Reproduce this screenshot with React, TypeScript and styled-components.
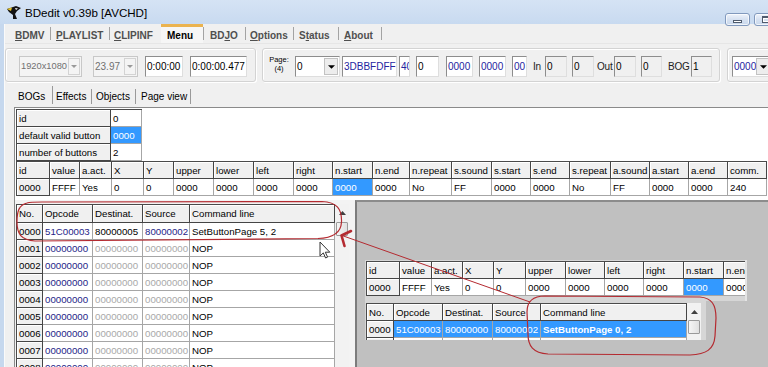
import React from 'react';
import styled, { createGlobalStyle } from 'styled-components';

const FONT = `"Liberation Sans", Arial, Helvetica, sans-serif`;

const Global = createGlobalStyle`
  html, body { margin: 0; padding: 0; background: #f0f0f0; }
  body { font-family: ${FONT}; }
  *, *::before, *::after { box-sizing: border-box; }
`;

/* ---------- window frame ---------- */
const Window = styled.div`
  position: relative;
  width: 768px;
  height: 367px;
  overflow: hidden;
  background: #c6d8ee;
  display: flex;
  flex-direction: column;
`;

const TitleBar = styled.div`
  flex: none;
  height: 24px;
  display: flex;
  align-items: flex-start;
  padding-left: 6px;
  background: linear-gradient(to bottom, #d5e3f4, #c8daf0);
`;

const AppIcon = styled.svg`
  flex: none;
  margin-top: 5px;
`;

const TitleText = styled.span`
  margin: 5px 0 0 3px;
  font-size: 11.6px;
  line-height: 15px;
  color: #000;
  white-space: nowrap;
`;

const CaptionBox = styled.div`
  flex: none;
  width: 43px;
  margin-left: auto;
  margin-top: 13px;
  display: flex;
  gap: 4px;
  z-index: 1;
`;

const CaptionBtn = styled.div`
  flex: none;
  width: 25px;
  height: 13px;
  border: 1px solid #8199bd;
  border-radius: 3px;
  background: linear-gradient(to bottom, #eef3fb, #d6e1f1 50%, #c9d8ec);
  box-shadow: inset 0 0 0 1px rgba(255, 255, 255, 0.7);
  display: flex;
  align-items: center;
  justify-content: center;
`;

const MinGlyph = styled.div`
  width: 9px;
  height: 3px;
  margin-top: 3px;
  background: #fff;
  border: 1px solid #4f5b6d;
`;

const MaxGlyph = styled.div`
  width: 9px;
  height: 7px;
  background: transparent;
  border: 1px solid #4f5b6d;
  border-top-width: 2px;
  box-shadow: inset 0 0 0 1px #fff;
`;

const Client = styled.div`
  flex: 1;
  min-height: 0;
  margin-left: 4px;
  border-left: 1px solid #fafafa;
  background: #f0f0f0;
  display: flex;
  flex-direction: column;
`;

/* ---------- main tabs ---------- */
const MainTabs = styled.div`
  flex: none;
  height: 20px;
  display: flex;
  align-items: stretch;
  padding-left: 4px;
  border-bottom: 1px solid #e6e6e6;
`;

const MainTab = styled.div<{ $w: number; $pl: number; $active?: boolean }>`
  flex: none;
  width: ${(p) => p.$w}px;
  padding-left: ${(p) => p.$pl}px;
  display: flex;
  align-items: center;
  font-size: 10px;
  font-weight: 700;
  white-space: nowrap;
  color: ${(p) => (p.$active ? '#000' : '#4f4f4f')};
  border-top: 3px solid ${(p) => (p.$active ? '#ebb34f' : 'transparent')};
  background: ${(p) => (p.$active ? '#f6f6f6' : 'transparent')};
  u {
    text-decoration: underline;
  }
`;

const TabSep = styled.div`
  flex: none;
  width: 1px;
  height: 13px;
  align-self: center;
  background: #a3a3a3;
`;

/* ---------- toolbar ---------- */
const Toolbar = styled.div`
  flex: none;
  height: 42px;
  display: flex;
  align-items: flex-start;
  padding-top: 4px;
`;

const GroupBox = styled.div<{ $w: number; $ml: number }>`
  flex: none;
  width: ${(p) => p.$w}px;
  margin-left: ${(p) => p.$ml}px;
  height: 34px;
  border: 1px solid #d3d3d3;
  border-radius: 3px;
  box-shadow: inset 1px 1px 0 #fff, 1px 1px 0 #fff;
  display: flex;
  align-items: flex-start;
  padding-top: 7px;
`;

const Edit = styled.div<{ $w: number; $ml: number; $color?: string; $ro?: boolean }>`
  flex: none;
  width: ${(p) => p.$w}px;
  margin-left: ${(p) => p.$ml}px;
  height: 21px;
  border: 1px solid;
  border-color: #8d8d8d #dedede #dedede #8d8d8d;
  background: ${(p) => (p.$ro ? '#f0f0f0' : '#fff')};
  color: ${(p) => p.$color ?? '#000'};
  font-size: 10px;
  line-height: 19px;
  padding-left: 1px;
  overflow: hidden;
  white-space: nowrap;
`;

const Combo = styled.div<{ $w: number; $ml: number; $disabled?: boolean }>`
  flex: none;
  width: ${(p) => p.$w}px;
  margin-left: ${(p) => p.$ml}px;
  height: 21px;
  display: flex;
  align-items: center;
  border: 1px solid;
  border-color: ${(p) =>
    p.$disabled ? '#c8c8c8' : '#8d8d8d #dedede #dedede #8d8d8d'};
  background: ${(p) => (p.$disabled ? '#f4f4f4' : '#fff')};
`;

const ComboText = styled.div<{ $color?: string; $size?: number }>`
  flex: 1;
  min-width: 0;
  padding-left: 1px;
  font-size: ${(p) => p.$size ?? 10}px;
  line-height: 19px;
  color: ${(p) => p.$color ?? '#000'};
  overflow: hidden;
  white-space: nowrap;
`;

const DropBtn = styled.div<{ $disabled?: boolean }>`
  flex: none;
  width: ${(p) => (p.$disabled ? 12 : 14)}px;
  height: 17px;
  margin-right: 1px;
  display: flex;
  align-items: center;
  justify-content: center;
  background: ${(p) => (p.$disabled ? '#f4f4f4' : '#ededed')};
  border: 1px solid ${(p) => (p.$disabled ? '#d3d3d3' : '#c2c2c2')};
`;

const PageLabel = styled.div`
  flex: none;
  width: 24px;
  margin-left: 4px;
  margin-top: -1px;
  display: flex;
  flex-direction: column;
  align-items: center;
  font-size: 7.5px;
  line-height: 9px;
  color: #000;
`;

const FieldLabel = styled.div<{ $w: number; $ml: number }>`
  flex: none;
  width: ${(p) => p.$w}px;
  margin-left: ${(p) => p.$ml}px;
  font-size: 10px;
  line-height: 21px;
  color: #222;
  white-space: nowrap;
  letter-spacing: -0.2px;
`;

/* ---------- sub tabs ---------- */
const SubTabs = styled.div`
  flex: none;
  height: 21px;
  display: flex;
  align-items: flex-end;
  padding-left: 9px;
`;

const SubTab = styled.div<{ $w: number; $pl: number }>`
  flex: none;
  width: ${(p) => p.$w}px;
  padding-left: ${(p) => p.$pl}px;
  height: 21px;
  display: flex;
  align-items: center;
  font-size: 10px;
  color: #000;
  white-space: nowrap;
`;

const SubSep = styled.div<{ $h: number }>`
  flex: none;
  width: 1px;
  height: ${(p) => p.$h}px;
  margin-bottom: 3px;
  background: #9a9a9a;
`;

/* ---------- tab page ---------- */
const TabPage = styled.div`
  flex: 1;
  min-height: 0;
  margin-left: 9px;
  border-top: 1px solid #8a8a8a;
  border-left: 1px solid #8a8a8a;
  display: flex;
  flex-direction: column;
  overflow: hidden;
`;

const UpperArea = styled.div`
  flex: none;
  height: 92px;
  background: #fff;
  padding: 1px 0 0 1px;
`;

const Bottom = styled.div`
  flex: 1;
  min-height: 0;
  display: flex;
`;

const CmdPane = styled.div`
  flex: none;
  width: 340px;
  padding: 4px 0 0 1px;
  display: flex;
  align-items: flex-start;
  background: #f3f3f3;
`;

const Preview = styled.div`
  flex: 1;
  min-width: 0;
  background: #c0c0c0;
  border-top: 2px solid #8c8c8c;
  border-left: 2px solid #7c7c7c;
  padding: 58px 0 0 8px;
  display: flex;
  flex-direction: column;
  align-items: flex-start;
`;

const InsetTop = styled.div`
  flex: none;
  width: 382px;
  height: 41px;
  background: #d6d6d6;
  padding: 1px 0 0 1px;
  overflow: hidden;
  border-right: 2px solid #e4e4e4;
`;

const InsetBottom = styled.div`
  flex: none;
  width: 341px;
  height: 39px;
  background: #d6d6d6;
  padding: 2px 0 0 1px;
  overflow: hidden;
  display: flex;
  align-items: flex-start;
`;

/* ---------- string grids ---------- */
type CellKind = 'fixed' | 'data' | 'sel';
type Tone = 'normal' | 'navy' | 'dim' | 'white';
const TONES: Record<Tone, string> = {
  normal: '#000',
  navy: '#1e1e88',
  dim: '#a9a9a9',
  white: '#fff',
};

const Grid = styled.div<{ $cols: number[]; $head?: number }>`
  flex: none;
  display: grid;
  grid-template-columns: ${(p) => p.$cols.map((c) => `${c}px`).join(' ')};
  grid-template-rows: ${(p) => p.$head ?? 17}px;
  grid-auto-rows: 17px;
  width: max-content;
  border-top: 1px solid #4a4a4a;
  border-left: 1px solid #4a4a4a;
  background: #fff;
`;

const Cell = styled.div<{ $k: CellKind; $c: Tone; $b?: boolean }>`
  display: flex;
  align-items: center;
  padding-left: 2px;
  overflow: hidden;
  white-space: nowrap;
  font-size: 9.7px;
  font-weight: ${(p) => (p.$b ? 700 : 400)};
  color: ${(p) => TONES[p.$c]};
  background: ${(p) =>
    p.$k === 'fixed' ? '#f0f0f0' : p.$k === 'sel' ? '#3399ff' : '#fff'};
  border-right: 1px solid ${(p) => (p.$k === 'fixed' ? '#454545' : '#a6a6a6')};
  border-bottom: 1px solid ${(p) => (p.$k === 'fixed' ? '#454545' : '#a6a6a6')};
  box-shadow: ${(p) => (p.$k === 'fixed' ? 'inset 1px 1px 0 #fff' : 'none')};
`;

const VScroll = styled.div<{ $h: number }>`
  flex: none;
  width: 14px;
  height: ${(p) => p.$h}px;
  background: #f2f2f2;
  display: flex;
  flex-direction: column;
  align-items: center;
`;

const ScrollUp = styled.div<{ $h: number }>`
  flex: none;
  width: 14px;
  height: ${(p) => p.$h}px;
  display: flex;
  align-items: center;
  justify-content: center;
`;

const Thumb = styled.div`
  flex: none;
  width: 12px;
  height: 14px;
  border: 1px solid #9a9a9a;
  border-radius: 1px;
  background: linear-gradient(to right, #f6f6f6, #e0e0e0);
`;

const Overlay = styled.svg`
  position: absolute;
  left: 0;
  top: 0;
  pointer-events: none;
`;

/* ---------- data ---------- */
type Spec = { t: string; k?: CellKind; c?: Tone; b?: boolean };

const renderRow = (cells: Spec[], key: string) =>
  cells.map((s, i) => {
    const k = s.k ?? 'data';
    const c = s.c ?? (k === 'sel' ? 'white' : 'normal');
    return (
      <Cell key={`${key}-${i}`} $k={k} $c={c} $b={s.b}>
        {s.t}
      </Cell>
    );
  });

const head = (labels: string[]): Spec[] => labels.map((t) => ({ t, k: 'fixed' }));

const btnHead = [
  'id', 'value', 'a.act.', 'X', 'Y', 'upper', 'lower', 'left', 'right', 'n.start',
  'n.end', 'n.repeat', 's.sound', 's.start', 's.end', 's.repeat', 'a.sound',
  'a.start', 'a.end', 'comm.',
];
const btnCols = [33, 30, 32, 32, 30, 40, 40, 40, 39, 40, 37, 42, 40, 39, 39, 41, 39, 39, 39, 39];
const btnRow: Spec[] = [
  { t: '0000', k: 'fixed' }, { t: 'FFFF' }, { t: 'Yes' }, { t: '0' }, { t: '0' },
  { t: '0000' }, { t: '0000' }, { t: '0000' }, { t: '0000' }, { t: '0000', k: 'sel' },
  { t: '0000' }, { t: 'No' }, { t: 'FF' }, { t: '0000' }, { t: '0000' }, { t: 'No' },
  { t: 'FF' }, { t: '0000' }, { t: '0000' }, { t: '240' },
];

const insetBtnCols = [33, 32, 31, 31, 32, 40, 39, 39, 40, 40, 40];

const cmdHead = ['No.', 'Opcode', 'Destinat.', 'Source', 'Command line'];
const cmdCols = [26, 50, 50, 47, 145];
const insetCmdCols = [27, 49, 50, 48, 146];

const nopRow = (n: string): Spec[] => [
  { t: n, k: 'fixed' },
  { t: '00000000', c: 'navy' },
  { t: '00000000', c: 'dim' },
  { t: '00000000', c: 'dim' },
  { t: 'NOP' },
];

const cmdRows: Spec[][] = [
  [
    { t: '0000', k: 'fixed' },
    { t: '51C00003', c: 'navy' },
    { t: '80000005' },
    { t: '80000002', c: 'navy' },
    { t: 'SetButtonPage 5, 2' },
  ],
  ...['0001', '0002', '0003', '0004', '0005', '0006', '0007', '0008'].map(nopRow),
];

const insetCmdRows: Spec[][] = [
  [
    { t: '0000', k: 'fixed' },
    { t: '51C00003', k: 'sel' },
    { t: '80000000', k: 'sel' },
    { t: '80000002', k: 'sel' },
    { t: 'SetButtonPage 0, 2', k: 'sel', b: true },
  ],
  nopRow('0001'),
];

const Arrow = ({ color = '#000', w = 7 }: { color?: string; w?: number }) => (
  <svg width={w} height={Math.ceil(w / 2)} viewBox={`0 0 ${w} ${w / 2}`}>
    <path d={`M0 0H${w}L${w / 2} ${w / 2}Z`} fill={color} />
  </svg>
);

const UpArrow = () => (
  <svg width="7" height="4" viewBox="0 0 7 4">
    <path d="M0 4H7L3.5 0Z" fill="#404040" />
  </svg>
);

const mainTabs = [
  { w: 41, pl: 6, u: 'B', rest: 'DMV', sep: true },
  { w: 58, pl: 5, u: 'P', rest: 'LAYLIST', sep: true },
  { w: 51, pl: 4, u: 'C', rest: 'LIPINF', sep: false },
  { w: 42, pl: 6, u: '', rest: 'Menu', sep: true, active: true },
  { w: 41, pl: 6, pre: 'BD', u: 'J', rest: 'O', sep: true },
  { w: 47, pl: 4, u: 'O', rest: 'ptions', sep: true },
  { w: 44, pl: 5, pre: 'S', u: 't', rest: 'atus', sep: true },
  { w: 42, pl: 5, u: 'A', rest: 'bout', sep: true },
];

const subTabs = [
  { w: 38, pl: 4, t: 'BOGs', h: 18 },
  { w: 38, pl: 3, t: 'Effects', h: 15 },
  { w: 43, pl: 4, t: 'Objects', h: 15 },
  { w: 54, pl: 5, t: 'Page view', h: 15 },
];

const NAVY = '#2424a0';
const RED = '#b42a30';

export default function App() {
  return (
    <>
      <Global />
      <Window>
        <TitleBar>
          <AppIcon width="16" height="16" viewBox="0 0 16 16">
            <path d="M1 4 L7 2 L10 1 L15 3 L11 6 L9 9 L11 14 L7 14 L7 10 L3 7 Z" fill="#141414" />
            <path d="M1 4 L6 2.5 L5 6 Z" fill="#e5c326" />
            <path d="M9 3 L12 3.5 L10 5 Z" fill="#fff" />
          </AppIcon>
          <TitleText>BDedit v0.39b [AVCHD]</TitleText>
          <CaptionBox>
            <CaptionBtn>
              <MinGlyph />
            </CaptionBtn>
            <CaptionBtn>
              <MaxGlyph />
            </CaptionBtn>
          </CaptionBox>
        </TitleBar>

        <Client>
          <MainTabs>
            {mainTabs.map((t, i) => (
              <React.Fragment key={i}>
                <MainTab $w={t.w} $pl={t.pl} $active={t.active}>
                  {t.pre}
                  {t.u && <u>{t.u}</u>}
                  {t.rest}
                </MainTab>
                {t.sep && <TabSep />}
              </React.Fragment>
            ))}
          </MainTabs>

          <Toolbar>
            <GroupBox $w={251} $ml={0}>
              <Combo $w={63} $ml={13} $disabled>
                <ComboText $color="#707070" $size={9.3}>1920x1080</ComboText>
                <DropBtn $disabled>
                  <Arrow color="#9a9a9a" w={6} />
                </DropBtn>
              </Combo>
              <Combo $w={45} $ml={11} $disabled>
                <ComboText $color="#707070">23.97</ComboText>
                <DropBtn $disabled>
                  <Arrow color="#9a9a9a" w={6} />
                </DropBtn>
              </Combo>
              <Edit $w={38} $ml={7}>0:00:00</Edit>
              <Edit $w={57} $ml={7}>0:00:00.477</Edit>
            </GroupBox>

            <GroupBox $w={458} $ml={6}>
              <PageLabel>
                <span>Page:</span>
                <span>(4)</span>
              </PageLabel>
              <Combo $w={45} $ml={4}>
                <ComboText>0</ComboText>
                <DropBtn>
                  <Arrow />
                </DropBtn>
              </Combo>
              <Edit $w={55} $ml={2} $color={NAVY}>3DBBFDFF</Edit>
              <Edit $w={11} $ml={2} $color={NAVY}>40</Edit>
              <Edit $w={23} $ml={6}>0</Edit>
              <Edit $w={27} $ml={7} $color={NAVY}>0000</Edit>
              <Edit $w={27} $ml={6} $color={NAVY}>0000</Edit>
              <Edit $w={15} $ml={6} $color={NAVY}>00</Edit>
              <FieldLabel $w={10} $ml={6}>In</FieldLabel>
              <Edit $w={22} $ml={2} $ro>0</Edit>
              <Edit $w={22} $ml={5} $ro>0</Edit>
              <FieldLabel $w={17} $ml={3}>Out</FieldLabel>
              <Edit $w={22} $ml={0} $ro>0</Edit>
              <Edit $w={21} $ml={5} $ro>0</Edit>
              <FieldLabel $w={19} $ml={6}>BOG</FieldLabel>
              <Edit $w={21} $ml={4} $ro>1</Edit>
            </GroupBox>

            <GroupBox $w={60} $ml={7}>
              <Combo $w={40} $ml={4}>
                <ComboText $color={NAVY}>0000</ComboText>
                <DropBtn>
                  <Arrow />
                </DropBtn>
              </Combo>
            </GroupBox>
          </Toolbar>

          <SubTabs>
            {subTabs.map((t) => (
              <React.Fragment key={t.t}>
                <SubTab $w={t.w} $pl={t.pl}>{t.t}</SubTab>
                <SubSep $h={t.h} />
              </React.Fragment>
            ))}
          </SubTabs>

          <TabPage>
            <UpperArea>
              <Grid $cols={[94, 31]}>
                {renderRow([{ t: 'id', k: 'fixed' }, { t: '0' }], 'i0')}
                {renderRow([{ t: 'default valid button', k: 'fixed' }, { t: '0000', k: 'sel' }], 'i1')}
                {renderRow([{ t: 'number of buttons', k: 'fixed' }, { t: '2' }], 'i2')}
              </Grid>
              <Grid $cols={btnCols}>
                {renderRow(head(btnHead), 'bh')}
                {renderRow(btnRow, 'br')}
              </Grid>
            </UpperArea>

            <Bottom>
              <CmdPane>
                <Grid $cols={cmdCols} $head={18}>
                  {renderRow(head(cmdHead), 'ch')}
                  {cmdRows.map((r, i) => renderRow(r, `cr${i}`))}
                </Grid>
                <VScroll $h={170}>
                  <ScrollUp $h={18}>
                    <UpArrow />
                  </ScrollUp>
                  <Thumb />
                </VScroll>
              </CmdPane>

              <Preview>
                <InsetTop>
                  <Grid $cols={insetBtnCols}>
                    {renderRow(head(btnHead.slice(0, 11)), 'ih')}
                    {renderRow(btnRow.slice(0, 11), 'ir')}
                  </Grid>
                </InsetTop>
                <InsetBottom>
                  <Grid $cols={insetCmdCols}>
                    {renderRow(head(cmdHead), 'ich')}
                    {insetCmdRows.map((r, i) => renderRow(r, `icr${i}`))}
                  </Grid>
                  <VScroll $h={40}>
                    <ScrollUp $h={17}>
                      <UpArrow />
                    </ScrollUp>
                    <Thumb />
                  </VScroll>
                </InsetBottom>
              </Preview>
            </Bottom>
          </TabPage>
        </Client>

        <Overlay width="768" height="367" viewBox="0 0 768 367">
          <path
            d="M27 203 C19 205 17 211 17 222 C17 234 21 240 35 241 L318 238.5 C333 238 341 233 341.5 222 C342 209 337 202 322 201.5 L42 202 C35 202 30 202 27 203 Z"
            fill="none"
            stroke={RED}
            strokeWidth="1.2"
          />
          <path d="M342 235.5 L530 302" stroke={RED} strokeWidth="1" fill="none" />
          <path
            d="M351 231 L341.5 235.5 L344.5 246"
            stroke={RED}
            strokeWidth="2.6"
            fill="none"
            strokeLinecap="round"
            strokeLinejoin="round"
          />
          <path
            d="M545 296 L700 297 C712 298 716 305 716 318 L715 336 C714 350 706 354 690 355 L548 354 C533 353 528 346 528 334 L527 312 C527 301 533 296 545 296 Z"
            fill="none"
            stroke={RED}
            strokeWidth="1.2"
          />
          <g transform="translate(320 242)">
            <path
              d="M0 0 L0 14 L3.3 10.9 L5.6 16 L7.6 15.1 L5.3 10.2 L9.8 10.2 Z"
              fill="#fff"
              stroke="#333"
              strokeWidth="1"
              strokeLinejoin="round"
            />
          </g>
        </Overlay>
      </Window>
    </>
  );
}
